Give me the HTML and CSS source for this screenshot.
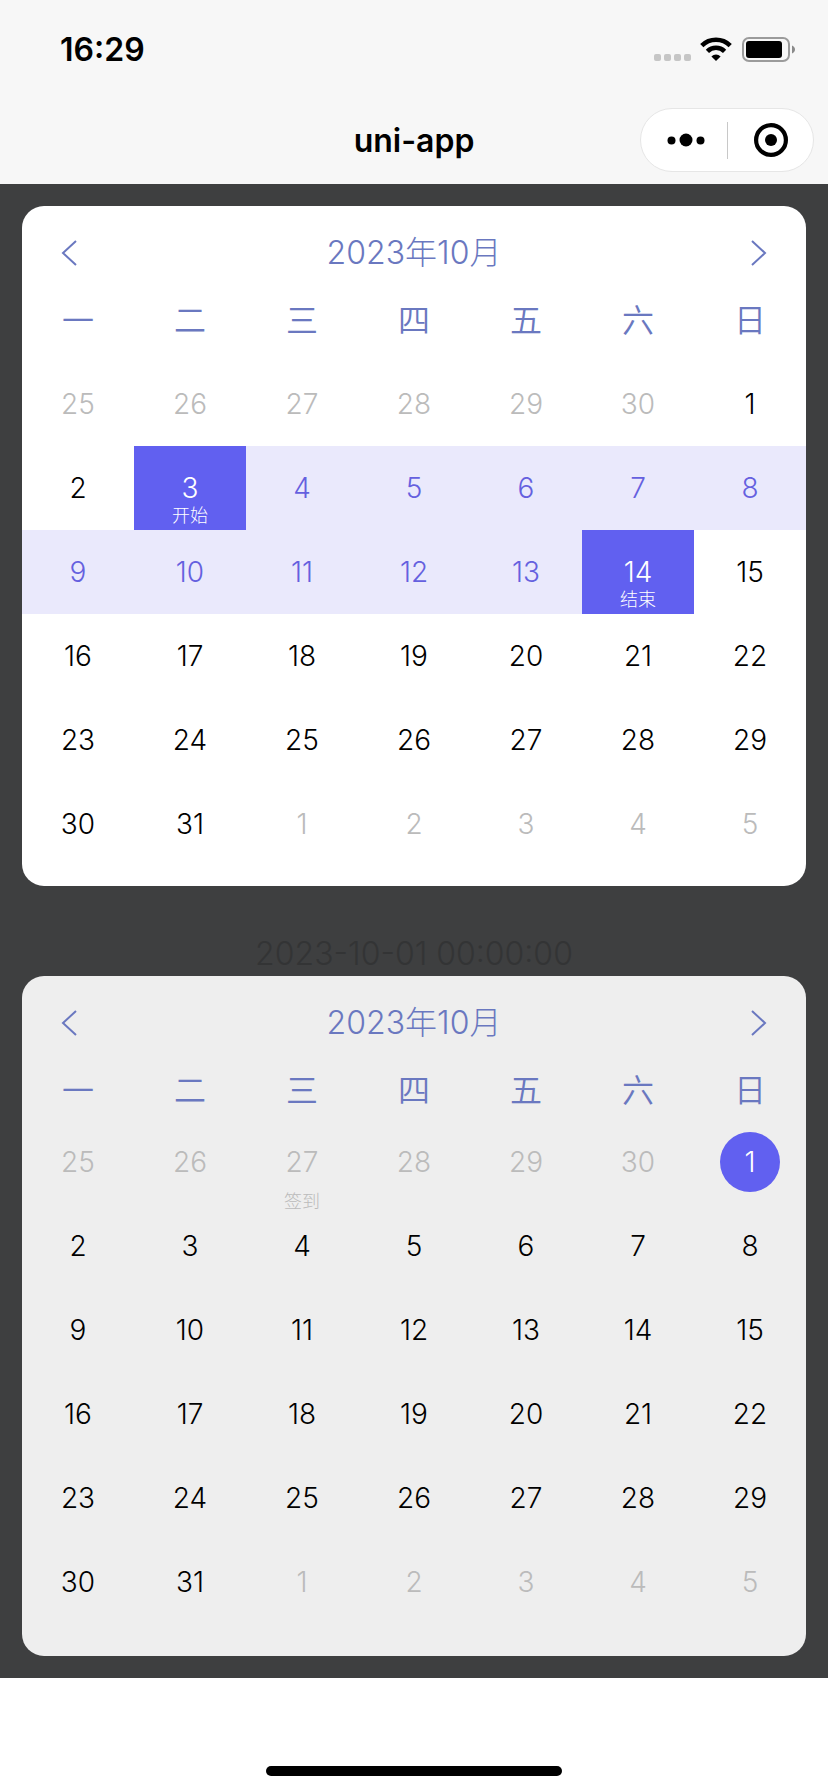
FILE: index.html
```html
<!DOCTYPE html>
<html lang="zh-CN">
<head>
  <meta charset="UTF-8" />
  <meta name="viewport" content="width=device-width, initial-scale=1.0"/>
  <title>uni-app</title>
  <link rel="stylesheet" href="styles.css">
</head>
<body>

  <header class="top">
    <div class="status-bar">
      <span class="time">16:29</span>
      <div class="status-icons">
        <svg class="signal" width="38" height="25" viewBox="0 0 38 25" fill="#c6c6c6">
          <rect x="0" y="17" width="7" height="7" rx="2"/>
          <rect x="10" y="17" width="7" height="7" rx="2"/>
          <rect x="20" y="17" width="7" height="7" rx="2"/>
          <rect x="30" y="17" width="7" height="7" rx="2"/>
        </svg>
        <svg class="wifi" width="32" height="25" viewBox="0 0 32 25" fill="none" stroke="#000" stroke-width="4.6">
          <path d="M1.8 8.6a20.3 20.3 0 0 1 28.4 0"/>
          <path d="M7.4 14.3a12.3 12.3 0 0 1 17.2 0"/>
          <path d="M16 24l-4.6-4.6a6.6 6.6 0 0 1 9.2 0z" fill="#000" stroke="none"/>
        </svg>
        <svg class="battery" width="54" height="25" viewBox="0 0 54 25">
          <rect x="1" y="1" width="46" height="23" rx="6" fill="none" stroke="#9b9b9b" stroke-width="2"/>
          <rect x="4" y="4" width="36" height="17" rx="3"/>
          <path d="M50 8.5c4 1.5 4 6.5 0 8z" fill="#8a8a8a"/>
        </svg>
      </div>
    </div>
    <nav class="nav-bar">
      <h1 class="nav-title">uni-app</h1>
      <div class="capsule">
        <button type="button" class="more-btn" aria-label="更多">
          <svg width="38" height="14" viewBox="0 0 38 14">
            <circle cx="4.5" cy="7.5" r="4"/>
            <circle cx="19" cy="7" r="6.5"/>
            <circle cx="33.5" cy="7.5" r="4"/>
          </svg>
        </button>
        <button type="button" class="close-btn" aria-label="关闭">
          <svg width="34" height="34" viewBox="0 0 34 34">
            <circle cx="17" cy="17" r="14.9" fill="none" stroke="#000" stroke-width="4.2"/>
            <circle cx="17" cy="17" r="6"/>
          </svg>
        </button>
      </div>
    </nav>
  </header>

  <main class="page">
    <section class="calendar range" id="rangeCalendar"></section>
    <p class="selected-date">2023-10-01 00:00:00</p>
    <section class="calendar single" id="singleCalendar"></section>
  </main>

  <footer class="bottom">
    <div class="home-indicator"></div>
  </footer>

  <script src="calendar.js"></script>
</body>
</html>
```

FILE: styles.css
```css
* {
  box-sizing: border-box;
}

body {
  margin: 0;
  min-height: 100vh;
  display: flex;
  flex-direction: column;
  font-family: 'Inter', 'Noto Sans CJK SC', sans-serif;
  background-color: #fff;
  color: #000;
}

button {
  padding: 0;
  border: none;
  background: none;
  font: inherit;
  color: inherit;
  cursor: pointer;
}

svg {
  display: block;
}

/* status bar + navigation */
.top {
  background-color: #f7f7f7;
}

.status-bar {
  display: flex;
  justify-content: space-between;
  align-items: center;
  height: 96px;
  padding: 3px 32px 0 60px;
}

.time {
  font-size: 32px;
  font-weight: 600;
}

.status-icons {
  display: flex;
  align-items: center;
}

.wifi {
  margin: 0 10px 0 8px;
}

.nav-bar {
  display: grid;
  grid-template-columns: 1fr auto 1fr;
  align-items: center;
  height: 88px;
  padding: 0 14px;
}

.nav-title {
  grid-column: 2;
  margin: 0;
  font-size: 32px;
  font-weight: 600;
}

.capsule {
  justify-self: end;
  display: flex;
  width: 174px;
  height: 64px;
  border: 1px solid #e6e6e6;
  border-radius: 32px;
  background-color: #fff;
}

.capsule button {
  width: 50%;
  display: flex;
  align-items: center;
}

.more-btn {
  justify-content: center;
  padding-left: 4px;
}

.close-btn::before {
  content: '';
  width: 1px;
  height: 37px;
  margin-right: 26px;
  background-color: #c8c8c8;
}

/* calendars */
.page {
  padding: 22px;
  background-color: #3e3f40;
}

.calendar {
  padding: 14px 0 20px;
  border-radius: 22px;
  background-color: #fff;
}

.calendar.single {
  background-color: #eee;
}

.calendar-header {
  display: flex;
  justify-content: space-between;
  align-items: center;
  height: 66px;
  padding: 0 33px;
  color: #6a78c0;
}

.calendar-title {
  margin: 0;
  font-size: 32px;
  font-weight: 300;
  line-height: 40px;
}

.calendar-header button {
  padding: 6px;
}

.calendar table {
  width: 100%;
  table-layout: fixed;
  border-spacing: 0;
}

.calendar th {
  height: 76px;
  padding: 0 0 6px;
  font-size: 32px;
  font-weight: 350;
  line-height: 40px;
  color: #6a78c0;
}

.calendar td {
  height: 84px;
  padding: 0;
}

.day {
  position: relative;
  display: flex;
  justify-content: center;
  align-items: center;
  width: 100%;
  height: 84px;
  font-size: 28px;
  font-weight: 300;
}

.single .day {
  align-items: flex-start;
}

.number {
  width: 60px;
  line-height: 60px;
  border-radius: 50%;
}

.mark {
  position: absolute;
  left: 0;
  right: 0;
  bottom: 5px;
  font-size: 18px;
  line-height: 18px;
}

.day.other {
  color: #bbb;
}

.day.between {
  background-color: #eae9fc;
  color: #6560df;
}

.day.edge {
  background-color: #6160f0;
  color: #fff;
}

.day.selected .number {
  background-color: #6160f0;
  color: #fff;
}

.selected-date {
  margin: 0;
  padding-top: 46px;
  font-size: 32px;
  font-weight: 300;
  line-height: 44px;
  text-align: center;
  color: #333435;
}

/* home indicator */
.bottom {
  flex: 1;
  display: flex;
  justify-content: center;
  align-items: flex-end;
  padding-bottom: 16px;
}

.home-indicator {
  width: 296px;
  height: 10px;
  border-radius: 5px;
  background-color: #000;
}
```

FILE: calendar.js
```javascript
const weekdays = ['一', '二', '三', '四', '五', '六', '日'];

function arrow(label, points) {
  return `<button type="button" aria-label="${label}">
    <svg width="16" height="28" viewBox="0 0 16 28" fill="none" stroke="currentColor" stroke-width="2">
      <polyline points="${points}"/>
    </svg>
  </button>`;
}

function renderCalendar(id, year, month, getState) {
  // Monday is the first column
  const offset = (new Date(year, month - 1, 1).getDay() + 6) % 7;
  let rows = '';

  for (let row = 0; row < 6; row++) {
    rows += '<tr>';
    for (let col = 0; col < 7; col++) {
      const date = new Date(year, month - 1, 1 - offset + row * 7 + col);
      const other = date.getMonth() !== month - 1;
      const state = getState(date.getMonth() + 1, date.getDate());
      const mark = state.mark ? `<span class="mark">${state.mark}</span>` : '';
      rows += `<td><button type="button" class="day ${other ? 'other' : ''} ${state.type || ''}">
        <span class="number">${date.getDate()}</span>${mark}</button></td>`;
    }
    rows += '</tr>';
  }

  document.getElementById(id).innerHTML = `
    <div class="calendar-header">
      ${arrow('上个月', '15,2 2,14 15,26')}
      <h2 class="calendar-title">${year}年${month}月</h2>
      ${arrow('下个月', '1,2 14,14 1,26')}
    </div>
    <table>
      <thead><tr>${weekdays.map(d => `<th>${d}</th>`).join('')}</tr></thead>
      <tbody>${rows}</tbody>
    </table>`;
}

renderCalendar('rangeCalendar', 2023, 10, (month, day) => {
  if (month !== 10) return {};
  if (day === 3) return { type: 'edge', mark: '开始' };
  if (day === 14) return { type: 'edge', mark: '结束' };
  if (day > 3 && day < 14) return { type: 'between' };
  return {};
});

renderCalendar('singleCalendar', 2023, 10, (month, day) => {
  if (month === 9 && day === 27) return { mark: '签到' };
  if (month === 10 && day === 1) return { type: 'selected' };
  return {};
});
```
